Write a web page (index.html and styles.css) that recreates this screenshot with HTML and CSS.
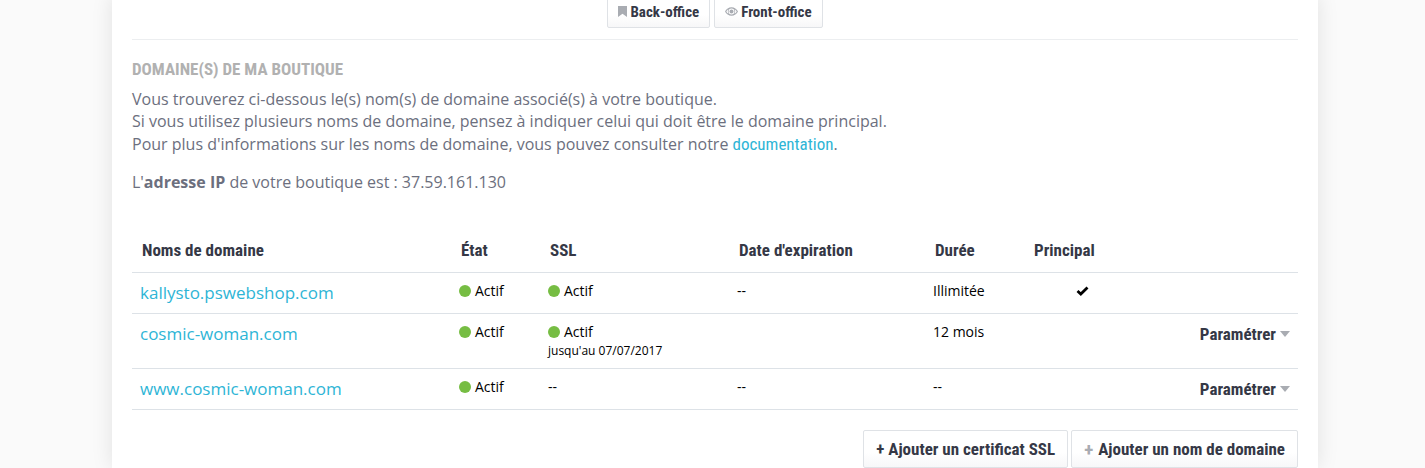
FILE: index.html
```html
<!DOCTYPE html>
<html lang="fr">
<head>
    <meta charset="UTF-8">
    <meta name="viewport" content="width=device-width, initial-scale=1.0">
    <title>Domaines de ma boutique</title>
    <link rel="stylesheet" href="styles.css">
</head>
<body>
    <div class="card">
        <div class="top-actions">
            <a class="btn" href="#">
                <svg class="icon" width="9" height="11" viewBox="0 0 9 11"><path d="M0 0h9v11L4.500 7.800 0 11z"/></svg>
                Back-office
            </a>
            <a class="btn" href="#">
                <svg class="icon" width="13" height="9" viewBox="0 0 12 8"><path fill-rule="evenodd" d="M6 0c2.700 0 4.800 1.700 6 4-1.200 2.300-3.300 4-6 4S1.200 6.300 0 4c1.200-2.300 3.300-4 6-4zm0 1.300a2.700 2.700 0 1 0 0 5.400 2.700 2.700 0 0 0 0-5.400zM1.200 4c.5.800 1.100 1.500 1.900 2a3.600 3.600 0 0 1 0-4c-.8.500-1.400 1.200-1.900 2zm9.600 0c-.5-.8-1.100-1.500-1.900-2a3.600 3.600 0 0 1 0 4c.8-.5 1.400-1.200 1.900-2z"/><circle cx="6" cy="4" r="1.800"/></svg>
                Front-office
            </a>
        </div>

        <h2 class="section-title">Domaine(s) de ma boutique</h2>
        <p class="intro">
            Vous trouverez ci-dessous le(s) nom(s) de domaine associé(s) à votre boutique.<br>
            Si vous utilisez plusieurs noms de domaine, pensez à indiquer celui qui doit être le domaine principal.<br>
            Pour plus d'informations sur les noms de domaine, vous pouvez consulter notre <a class="doc-link" href="#">documentation</a>.
        </p>
        <p class="intro ip">L'<strong>adresse IP</strong> de votre boutique est : 37.59.161.130</p>

        <table class="domains">
            <thead>
                <tr>
                    <th class="col-name">Noms de domaine</th>
                    <th class="col-state">État</th>
                    <th class="col-ssl">SSL</th>
                    <th class="col-date">Date d'expiration</th>
                    <th class="col-term">Durée</th>
                    <th class="col-main">Principal</th>
                    <th></th>
                </tr>
            </thead>
            <tbody>
                <tr class="row-short">
                    <td><a class="domain" href="#">kallysto.pswebshop.com</a></td>
                    <td><span class="dot"></span>Actif</td>
                    <td><span class="dot"></span>Actif</td>
                    <td>--</td>
                    <td>Illimitée</td>
                    <td class="main-cell">
                        <svg width="13" height="10" viewBox="0 0 13 10"><path d="M1.500 5 4.800 8 11.500 1.500" fill="none" stroke="#000" stroke-width="2.800"/></svg>
                    </td>
                    <td></td>
                </tr>
                <tr class="row-tall">
                    <td><a class="domain" href="#">cosmic-woman.com</a></td>
                    <td><span class="dot"></span>Actif</td>
                    <td><span class="dot"></span>Actif<div class="until">jusqu'au 07/07/2017</div></td>
                    <td></td>
                    <td>12 mois</td>
                    <td></td>
                    <td class="action"><a class="setup" href="#">Paramétrer<span class="caret"></span></a></td>
                </tr>
                <tr class="row-short">
                    <td><a class="domain" href="#">www.cosmic-woman.com</a></td>
                    <td><span class="dot"></span>Actif</td>
                    <td>--</td>
                    <td>--</td>
                    <td>--</td>
                    <td></td>
                    <td class="action"><a class="setup" href="#">Paramétrer<span class="caret"></span></a></td>
                </tr>
            </tbody>
        </table>

        <div class="bottom-actions">
            <a class="btn btn-large" href="#"><span>+</span> Ajouter un certificat SSL</a>
            <a class="btn btn-large" href="#"><span class="plus">+</span> Ajouter un nom de domaine</a>
        </div>
    </div>
</body>
</html>
```

FILE: styles.css
```css
html, body {
    height: 468px;
    overflow: hidden;
}
body {
    margin: 0;
    background-color: #fafafa;
    color: #6c6f7e;
    font-family: 'Open Sans', sans-serif;
    font-size: 16px;
}
.card {
    box-sizing: border-box;
    width: 1206px;
    height: 473px;
    margin: -5px 0 0 112px;
    padding: 0 20px;
    background-color: #fff;
    box-shadow: 0 0 20px rgba(0, 0, 0, 0.1);
}
.top-actions {
    display: flex;
    justify-content: center;
    gap: 4px;
    padding-bottom: 11px;
    border-bottom: 1px solid #eceef0;
}
.btn {
    box-sizing: border-box;
    display: inline-flex;
    align-items: center;
    gap: 3px;
    height: 33px;
    padding: 0 10px;
    background: linear-gradient(#fff 60%, #f7f7f8);
    border: 1px solid #dfe2e6;
    border-radius: 2px;
    color: #353846;
    font-family: Roboto, sans-serif;
    font-stretch: condensed;
    font-size: 15px;
    font-weight: 700;
    text-decoration: none;
    white-space: nowrap;
}
.icon {
    fill: #a9acb2;
}
.section-title {
    margin: 20px 0 0;
    color: #b1b1b1;
    font-family: Roboto, sans-serif;
    font-stretch: condensed;
    font-size: 17px;
    font-weight: 700;
    line-height: 19px;
    text-transform: uppercase;
}
.intro {
    margin: 8.600px 0 0;
    line-height: 22.500px;
}
.ip {
    margin-top: 16px;
}
.doc-link {
    color: #2eb5d6;
    font-family: Roboto, sans-serif;
    font-stretch: condensed;
    font-size: 17px;
    text-decoration: none;
}
.domains {
    width: 1166px;
    margin-top: 35px;
    border-collapse: collapse;
    table-layout: fixed;
    color: #000;
    font-size: 14px;
}
.domains th {
    box-sizing: border-box;
    height: 44px;
    padding: 0 10px;
    border-bottom: 1px solid #dde2e7;
    color: #353846;
    font-family: Roboto, sans-serif;
    font-stretch: condensed;
    font-size: 17px;
    font-weight: 700;
    text-align: left;
}
.domains td {
    padding: 9px 8px 0;
    border-bottom: 1px solid #dde2e7;
    vertical-align: top;
    line-height: 18px;
}
.col-name { width: 319px; }
.col-state { width: 89px; }
.col-ssl { width: 189px; }
.col-date { width: 196px; }
.col-term { width: 99px; }
.col-main { width: 116px; }
.row-short { height: 41px; }
.row-tall { height: 55px; }
.domain {
    color: #2eb5d6;
    font-size: 17px;
    line-height: 22px;
    text-decoration: none;
}
.dot {
    display: inline-block;
    width: 12px;
    height: 12px;
    margin-right: 4px;
    border-radius: 50%;
    background-color: #76bd43;
    vertical-align: -1px;
}
.until {
    margin-top: 1px;
    font-size: 12px;
    line-height: 18px;
}
.domains .main-cell {
    padding-left: 0;
    padding-right: 0;
    text-align: center;
}
.domains .action {
    padding-top: 11px;
    text-align: right;
    white-space: nowrap;
}
.setup {
    color: #353846;
    font-family: Roboto, sans-serif;
    font-stretch: condensed;
    font-size: 17px;
    font-weight: 700;
    text-decoration: none;
}
.caret {
    display: inline-block;
    margin-left: 4px;
    border-top: 6px solid #a9acb2;
    border-left: 5px solid transparent;
    border-right: 5px solid transparent;
    vertical-align: 3px;
}
.bottom-actions {
    display: flex;
    justify-content: flex-end;
    gap: 3px;
    margin-top: 20px;
}
.btn-large {
    gap: 4px;
    height: 38px;
    padding: 0 12px;
    font-size: 17px;
}
.plus {
    margin-right: 1px;
    color: #a9acb2;
    font-size: 19px;
}
```
